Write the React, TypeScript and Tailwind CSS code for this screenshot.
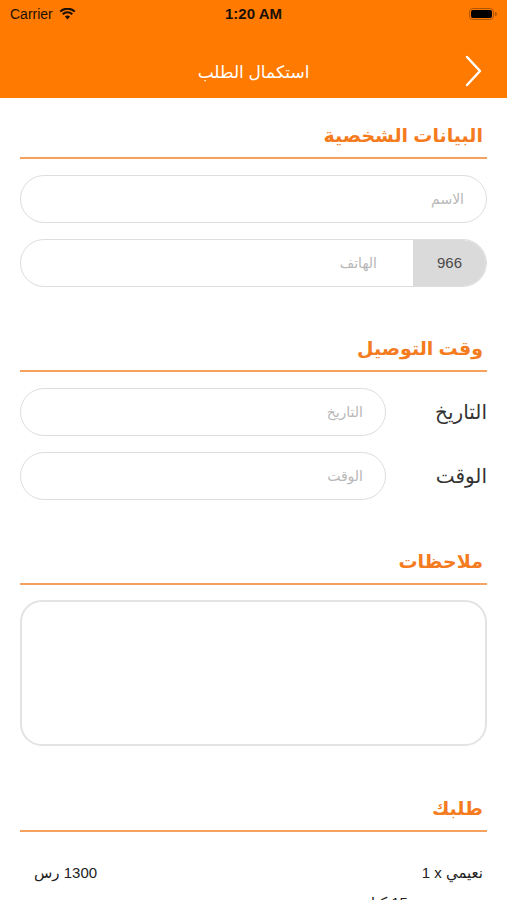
import React from "react";

const font = { fontFamily: '"Liberation Sans", "DejaVu Sans", sans-serif' };

function SectionTitle({ title }: { title: string }) {
  return (
    <div className="px-5">
      <h2 className="text-[19px] font-bold text-[#f47b20] leading-[28px] pr-[4px]">{title}</h2>
      <div className="h-[2px] bg-[#f6a25e] mt-[7px]" />
    </div>
  );
}

function Field({ placeholder, className = "" }: { placeholder: string; className?: string }) {
  return (
    <div
      className={
        "h-[48px] rounded-full border border-[#dedede] flex items-center pr-[22px] text-[14px] text-[#b8b8b8] " +
        className
      }
    >
      {placeholder}
    </div>
  );
}

export default function App() {
  return (
    <div dir="rtl" className="w-[507px] h-[900px] overflow-hidden bg-white" style={font}>
      {/* header */}
      <div className="bg-[#ff7a00] h-[98px]">
        <div dir="ltr" className="h-[28px] flex items-center justify-between px-[10px] text-[#1c1005]">
          <div className="flex items-center gap-[6px] w-[120px]">
            <span className="text-[14px]">Carrier</span>
            <svg width="17" height="12" viewBox="0 0 17 12">
              <path d="M8.5 11.5 L5.9 8.6 A3.8 3.8 0 0 1 11.1 8.6 Z" fill="#1c1005" />
              <path d="M3.7 6.3 A6.9 6.9 0 0 1 13.3 6.3" stroke="#1c1005" strokeWidth="2" fill="none" />
              <path d="M1.2 3.6 A10.5 10.5 0 0 1 15.8 3.6" stroke="#1c1005" strokeWidth="2" fill="none" />
            </svg>
          </div>
          <span className="text-[15px] font-bold">1:20 AM</span>
          <div className="w-[120px] flex justify-end items-center">
            <div className="w-[25px] h-[12px] rounded-[4px] border border-[#b25500] p-[1px]">
              <div className="w-full h-full rounded-[2px] bg-black" />
            </div>
            <div className="w-[2px] h-[4px] bg-[#b25500] rounded-r-sm ml-[1px]" />
          </div>
        </div>
        <div className="relative h-[70px] flex items-center justify-center">
          <span className="text-white text-[17px] mt-[19px]">استكمال الطلب</span>
          <svg className="absolute right-[25px] top-[27px]" width="18" height="32" viewBox="0 0 18 32">
            <path d="M3 2 L16 16 L3 30" stroke="white" strokeWidth="2.5" fill="none" strokeLinecap="round" strokeLinejoin="round" />
          </svg>
        </div>
      </div>

      <div className="pt-[24px]">
        <SectionTitle title="البيانات الشخصية" />
        <div className="px-5 mt-[16px] flex flex-col gap-[16px]">
          <Field placeholder="الاسم" />
          <div className="h-[48px] rounded-full border border-[#dedede] flex overflow-hidden">
            <div className="w-[73px] bg-[#dadada] flex items-center justify-center text-[15px] text-[#4a4a4a]">966</div>
            <div className="flex-1 flex items-center pr-[36px] text-[14px] text-[#b8b8b8]">الهاتف</div>
          </div>
        </div>

        <div className="mt-[48px]">
          <SectionTitle title="وقت التوصيل" />
        </div>
        <div className="px-5 mt-[16px] flex flex-col gap-[16px]">
          <div className="flex items-center">
            <div className="w-[101px] text-[20px] text-[#333]">التاريخ</div>
            <Field placeholder="التاريخ" className="flex-1" />
          </div>
          <div className="flex items-center">
            <div className="w-[101px] text-[20px] text-[#333]">الوقت</div>
            <Field placeholder="الوقت" className="flex-1" />
          </div>
        </div>

        <div className="mt-[48px]">
          <SectionTitle title="ملاحظات" />
        </div>
        <div className="px-5 mt-[15px]">
          <div className="h-[146px] rounded-[22px] border-2 border-[#e3e3e3]" />
        </div>

        <div className="mt-[49px]">
          <SectionTitle title="طلبك" />
        </div>
        <div className="pr-[24px] pl-[34px] mt-[30px] text-[15px] text-[#222] flex flex-col gap-[7px]">
          <div className="flex justify-between items-center">
            <span>{"نعيمي x\u200F 1"}</span>
            <span>1300 رس</span>
          </div>
          <div className="flex justify-between items-center">
            <span>وزن تقريبي 15 كيلو</span>
            <span></span>
          </div>
        </div>
      </div>
    </div>
  );
}
